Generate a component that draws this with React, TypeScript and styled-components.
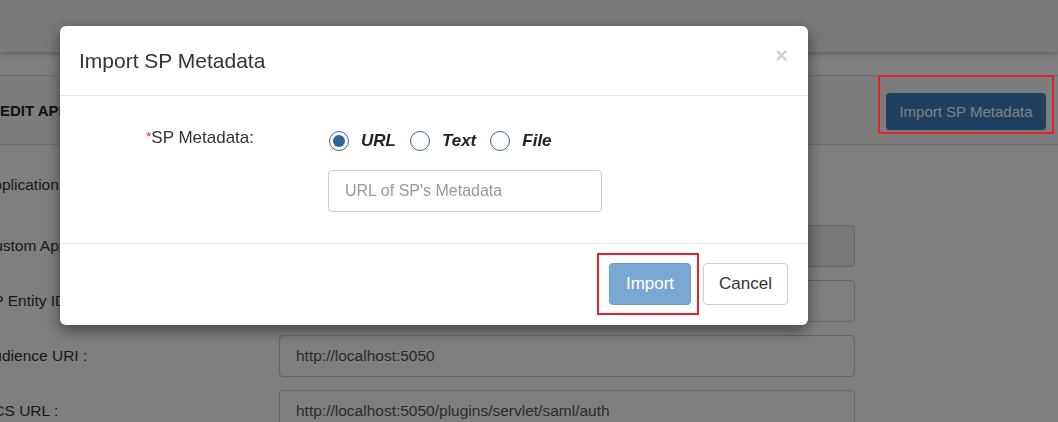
import React from "react";
import styled, { createGlobalStyle } from "styled-components";

const GlobalStyle = createGlobalStyle`
  html, body {
    margin: 0;
    padding: 0;
    background: #ffffff;
    overflow: hidden;
  }
  body {
    font-family: "Liberation Sans", Arial, Helvetica, sans-serif;
    color: #333333;
  }
`;

const rows = [
  { label: "Application Name :", value: null, disabled: false },
  { label: "Custom App Name :", value: "", disabled: true },
  { label: "SP Entity ID :", value: "", disabled: false },
  { label: "Audience URI :", value: "http://localhost:5050", disabled: false },
  { label: "ACS URL :", value: "http://localhost:5050/plugins/servlet/saml/auth", disabled: false },
];

const App = () => {
  return (
    <>
      <GlobalStyle />
      <Page>
        <TopBar />
        <SectionHeader>
          <SectionTitle>EDIT APP</SectionTitle>
          <HeaderButton>Import SP Metadata</HeaderButton>
        </SectionHeader>
        <Form>
          {rows.map((r) => (
            <FormRow key={r.label} $textOnly={r.value === null}>
              <FormLabel>{r.label}</FormLabel>
              {r.value !== null && (
                <PageInput $disabled={r.disabled}>{r.value}</PageInput>
              )}
            </FormRow>
          ))}
        </Form>
      </Page>

      <Backdrop />
      <Highlight />

      <Modal>
        <ModalHeader>
          <ModalTitle>Import SP Metadata</ModalTitle>
          <Close>×</Close>
        </ModalHeader>
        <ModalBody>
          <FieldLabel>
            <Req>*</Req>SP Metadata:
          </FieldLabel>
          <Field>
            <RadioGroup>
              <RadioItem>
                <Radio $checked />
                <RadioText>URL</RadioText>
              </RadioItem>
              <RadioItem>
                <Radio />
                <RadioText>Text</RadioText>
              </RadioItem>
              <RadioItem>
                <Radio />
                <RadioText>File</RadioText>
              </RadioItem>
            </RadioGroup>
            <UrlInput placeholder="URL of SP's Metadata" />
          </Field>
        </ModalBody>
        <ModalFooter>
          <Marked>
            <PrimaryButton>Import</PrimaryButton>
          </Marked>
          <DefaultButton>Cancel</DefaultButton>
        </ModalFooter>
      </Modal>
    </>
  );
};

export default App;

const Page = styled.div`
  width: 1058px;
  height: 422px;
  overflow: hidden;
`;

const TopBar = styled.div`
  height: 52px;
  background: #f3f3f3;
  box-shadow: 0 2px 5px rgba(0, 0, 0, 0.25);
  margin-bottom: 23px;
`;

const SectionHeader = styled.div`
  height: 68px;
  border-top: 1px solid #dddddd;
  border-bottom: 1px solid #dddddd;
  background: #f8f8f8;
  display: flex;
  align-items: center;
  justify-content: space-between;
  padding: 0 12px 0 0;
`;

const SectionTitle = styled.div`
  font-size: 15px;
  font-weight: 700;
  color: #222222;
`;

const HeaderButton = styled.div`
  width: 160px;
  height: 37px;
  display: flex;
  align-items: center;
  justify-content: center;
  background: #3d80c0;
  border-radius: 4px;
  color: #ffffff;
  font-size: 15px;
  margin-top: 3px;
`;

const Form = styled.div`
  display: flex;
  flex-direction: column;
  gap: 13px;
  padding-top: 19px;
  margin-left: -17px;
`;

const FormRow = styled.div<{ $textOnly?: boolean }>`
  display: flex;
  align-items: center;
  min-height: 42px;
  margin-bottom: ${(p) => (p.$textOnly ? "6px" : "0")};
`;

const FormLabel = styled.div`
  width: 296px;
  font-size: 15.5px;
  color: #333333;
`;

const PageInput = styled.div<{ $disabled?: boolean }>`
  width: 576px;
  height: 42px;
  box-sizing: border-box;
  border: 1px solid #cccccc;
  border-radius: 4px;
  background: ${(p) => (p.$disabled ? "#eeeeee" : "#ffffff")};
  display: flex;
  align-items: center;
  padding-left: 16px;
  font-size: 15.5px;
  color: #555555;
`;

const Backdrop = styled.div`
  position: fixed;
  inset: 0;
  background: rgba(0, 0, 0, 0.5);
  z-index: 10;
`;

const Highlight = styled.div`
  position: fixed;
  left: 878px;
  top: 75px;
  width: 176px;
  height: 59px;
  box-sizing: border-box;
  border: 2px solid #e0242c;
  z-index: 11;
`;

const Modal = styled.div`
  position: fixed;
  left: 60px;
  top: 26px;
  width: 748px;
  background: #ffffff;
  border-radius: 6px;
  box-shadow: 0 5px 15px rgba(0, 0, 0, 0.5);
  z-index: 20;
`;

const ModalHeader = styled.div`
  display: flex;
  justify-content: space-between;
  align-items: flex-start;
  padding: 23px 20px 23px 19px;
  border-bottom: 1px solid #e5e5e5;
`;

const ModalTitle = styled.div`
  font-size: 21px;
  line-height: 23px;
  color: #333333;
`;

const Close = styled.div`
  font-size: 22px;
  font-weight: 700;
  line-height: 20px;
  color: #000000;
  opacity: 0.18;
  margin-top: -3px;
`;

const ModalBody = styled.div`
  display: grid;
  grid-template-columns: 194px 1fr;
  column-gap: 74px;
  padding: 33px 0 31px;
`;

const FieldLabel = styled.div`
  text-align: right;
  font-size: 17px;
  line-height: 24px;
  color: #333333;
  margin-top: -3px;
`;

const Req = styled.span`
  color: #e03030;
  font-size: 13px;
  vertical-align: top;
  position: relative;
  top: -1px;
`;

const Field = styled.div`
  display: flex;
  flex-direction: column;
  gap: 17px;
`;

const RadioGroup = styled.div`
  display: flex;
  align-items: center;
  height: 24px;
  gap: 14px;
  padding-left: 1px;
`;

const RadioItem = styled.label`
  display: flex;
  align-items: center;
  gap: 12px;
`;

const Radio = styled.span<{ $checked?: boolean }>`
  width: 20px;
  height: 20px;
  box-sizing: border-box;
  border-radius: 50%;
  border: 1px solid #3b6690;
  display: flex;
  align-items: center;
  justify-content: center;
  background: #ffffff;
  &::after {
    content: "";
    width: 12px;
    height: 12px;
    border-radius: 50%;
    background: ${(p) => (p.$checked ? "#2d6399" : "transparent")};
  }
`;

const RadioText = styled.span`
  font-size: 17px;
  font-weight: 700;
  font-style: italic;
  color: #222222;
`;

const UrlInput = styled.input`
  width: 274px;
  height: 42px;
  box-sizing: border-box;
  border: 1px solid #cccccc;
  border-radius: 4px;
  padding: 0 16px;
  font-family: "Liberation Sans", Arial, sans-serif;
  font-size: 16px;
  color: #555555;
  outline: none;
  &::placeholder {
    color: #999999;
  }
`;

const ModalFooter = styled.div`
  display: flex;
  justify-content: flex-end;
  align-items: center;
  gap: 4px;
  padding: 9px 20px 10px;
  border-top: 1px solid #e5e5e5;
`;

const Marked = styled.div`
  border: 2px solid #e0242c;
  padding: 8px 6px 8px 10px;
`;

const BaseButton = styled.div`
  height: 42px;
  box-sizing: border-box;
  display: flex;
  align-items: center;
  justify-content: center;
  border-radius: 4px;
  font-size: 17px;
`;

const PrimaryButton = styled(BaseButton)`
  width: 82px;
  background: #7ba7d3;
  border: 1px solid #6e9cc9;
  color: #ffffff;
`;

const DefaultButton = styled(BaseButton)`
  width: 85px;
  background: #ffffff;
  border: 1px solid #cccccc;
  color: #333333;
`;
